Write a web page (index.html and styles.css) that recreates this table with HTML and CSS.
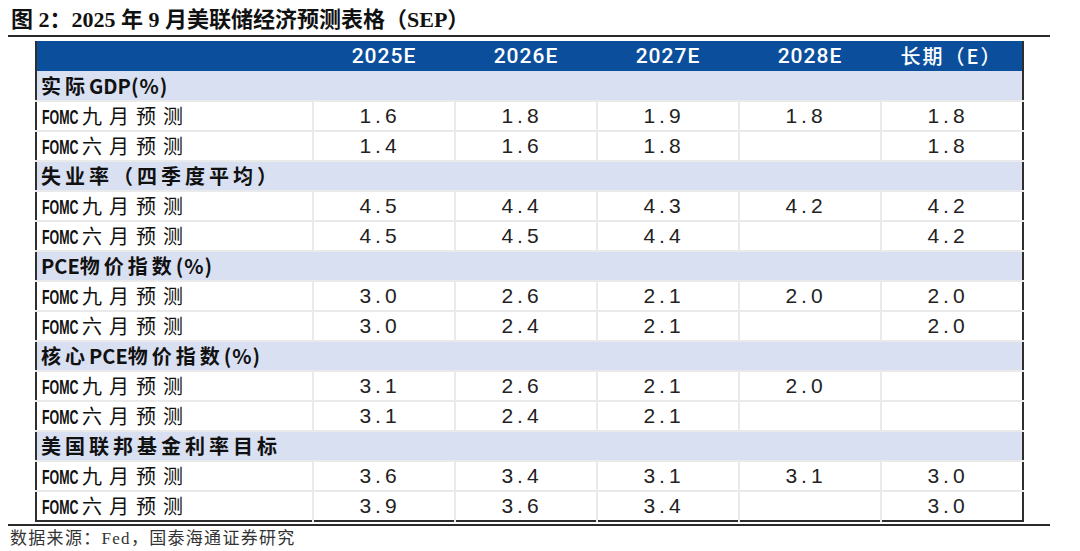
FILE: index.html
```html
<!DOCTYPE html>
<html lang="zh-CN">
<head>
<meta charset="utf-8">
<title>2025 年 9 月美联储经济预测表格（SEP）</title>
<link rel="stylesheet" href="styles.css">
</head>
<body>
<div class="figure">
  <div class="title">图 2：2025 年 9 月美联储经济预测表格（SEP）</div>
  <table class="sep">
    <colgroup>
      <col class="c-label"><col class="c-num"><col class="c-num"><col class="c-num"><col class="c-num"><col class="c-num">
    </colgroup>
    <thead>
      <tr class="head">
        <th></th><th>2025E</th><th>2026E</th><th>2027E</th><th>2028E</th><th class="cn">长期（E）</th>
      </tr>
    </thead>
    <tbody>
      <tr class="sec"><td colspan="6"><span class="cjk">实际</span>GDP<span class="pct">(%)</span></td></tr>
      <tr><td class="lab"><span class="fomc"><span>FOMC</span></span>九月预测</td><td>1.6</td><td>1.8</td><td>1.9</td><td>1.8</td><td>1.8</td></tr>
      <tr><td class="lab"><span class="fomc"><span>FOMC</span></span>六月预测</td><td>1.4</td><td>1.6</td><td>1.8</td><td></td><td>1.8</td></tr>

      <tr class="sec"><td colspan="6"><span class="cjk">失业率（四季度平均）</span></td></tr>
      <tr><td class="lab"><span class="fomc"><span>FOMC</span></span>九月预测</td><td>4.5</td><td>4.4</td><td>4.3</td><td>4.2</td><td>4.2</td></tr>
      <tr><td class="lab"><span class="fomc"><span>FOMC</span></span>六月预测</td><td>4.5</td><td>4.5</td><td>4.4</td><td></td><td>4.2</td></tr>

      <tr class="sec"><td colspan="6">PCE<span class="cjk">物价指数</span><span class="pct">(%)</span></td></tr>
      <tr><td class="lab"><span class="fomc"><span>FOMC</span></span>九月预测</td><td>3.0</td><td>2.6</td><td>2.1</td><td>2.0</td><td>2.0</td></tr>
      <tr><td class="lab"><span class="fomc"><span>FOMC</span></span>六月预测</td><td>3.0</td><td>2.4</td><td>2.1</td><td></td><td>2.0</td></tr>

      <tr class="sec"><td colspan="6"><span class="cjk">核心</span>PCE<span class="cjk">物价指数</span><span class="pct">(%)</span></td></tr>
      <tr><td class="lab"><span class="fomc"><span>FOMC</span></span>九月预测</td><td>3.1</td><td>2.6</td><td>2.1</td><td>2.0</td><td></td></tr>
      <tr><td class="lab"><span class="fomc"><span>FOMC</span></span>六月预测</td><td>3.1</td><td>2.4</td><td>2.1</td><td></td><td></td></tr>

      <tr class="sec"><td colspan="6"><span class="cjk">美国联邦基金利率目标</span></td></tr>
      <tr><td class="lab"><span class="fomc"><span>FOMC</span></span>九月预测</td><td>3.6</td><td>3.4</td><td>3.1</td><td>3.1</td><td>3.0</td></tr>
      <tr><td class="lab"><span class="fomc"><span>FOMC</span></span>六月预测</td><td>3.9</td><td>3.6</td><td>3.4</td><td></td><td>3.0</td></tr>
    </tbody>
  </table>
  <div class="source">数据来源：Fed，国泰海通证券研究</div>
</div>
</body>
</html>
```

FILE: styles.css
```css
html, body {
  margin: 0;
  padding: 0;
  background: #ffffff;
}

.figure {
  width: 1042px;
  margin-left: 8px;
}

.title {
  height: 37px;
  box-sizing: border-box;
  padding: 0 0 2px 3px;
  display: flex;
  align-items: flex-end;
  border-bottom: 2px solid #2a2a2a;
  font-family: "Liberation Serif", "Noto Sans CJK SC", serif;
  font-weight: bold;
  font-size: 22px;
  line-height: 26px;
  color: #111;
}

.sep {
  margin: 4px 0 0 27px;
  width: 987px;
  table-layout: fixed;
  border-collapse: collapse;
  border-left: 2px solid #2e2e2e;
  border-right: 2px solid #2e2e2e;
  border-bottom: 2px solid #2e2e2e;
}

.c-label { width: 277px; }
.c-num { width: 142px; }

.sep th,
.sep td {
  height: 30px;
  padding: 0;
  line-height: 26px;
  box-sizing: border-box;
  white-space: nowrap;
  overflow: hidden;
}

.head th {
  background: #0b4f9c;
  color: #ffffff;
  font-family: Roboto, "Liberation Sans", sans-serif;
  font-weight: 500;
  font-size: 21px;
  letter-spacing: 1px;
  text-align: center;
  height: 30px;
}

.head th.cn {
  font-family: "Noto Sans CJK SC", sans-serif;
  font-weight: 500;
  font-size: 20px;
  letter-spacing: 2px;
}

.sec td {
  background: #d9e0f2;
  font-family: "Noto Sans CJK SC", sans-serif;
  font-weight: 700;
  font-size: 20px;
  letter-spacing: 0;
  color: #111;
  padding-left: 4px;
  text-align: left;
  border-bottom: 2px solid #eaeaea;
}

.sec .cjk {
  letter-spacing: 4px;
}

.sec .pct {
  letter-spacing: 1px;
}

.sep tbody tr:not(.sec) td {
  border-bottom: 2px solid #eaeaea;
  border-left: 2px solid #eaeaea;
  font-family: "Liberation Sans", Arial, sans-serif;
  font-size: 21px;
  letter-spacing: 4px;
  color: #222;
  text-align: center;
  padding-right: 8px;
}

.sep tbody tr:not(.sec) td.lab {
  border-left: none;
  text-align: left;
  padding: 0 0 0 5px;
  font-family: "Noto Sans CJK SC", sans-serif;
  font-weight: 400;
  font-size: 20px;
  letter-spacing: 7px;
  color: #111;
}

.fomc {
  display: inline-block;
  width: 37px;
  margin-right: 3px;
  white-space: nowrap;
  letter-spacing: 0;
  vertical-align: baseline;
}

.fomc span {
  display: inline-block;
  font-family: "Liberation Sans", Arial, sans-serif;
  font-weight: 700;
  font-size: 20px;
  transform: scaleX(0.62);
  transform-origin: left center;
}

.sep tbody tr:last-child td {
  border-bottom: none;
}

.source {
  margin-top: 2px;
  border-top: 2px solid #2a2a2a;
  padding: 2px 0 0 2px;
  font-family: "Liberation Serif", "Noto Sans CJK SC", serif;
  font-size: 17px;
  letter-spacing: 1.3px;
  line-height: 21px;
  color: #333;
}
```
